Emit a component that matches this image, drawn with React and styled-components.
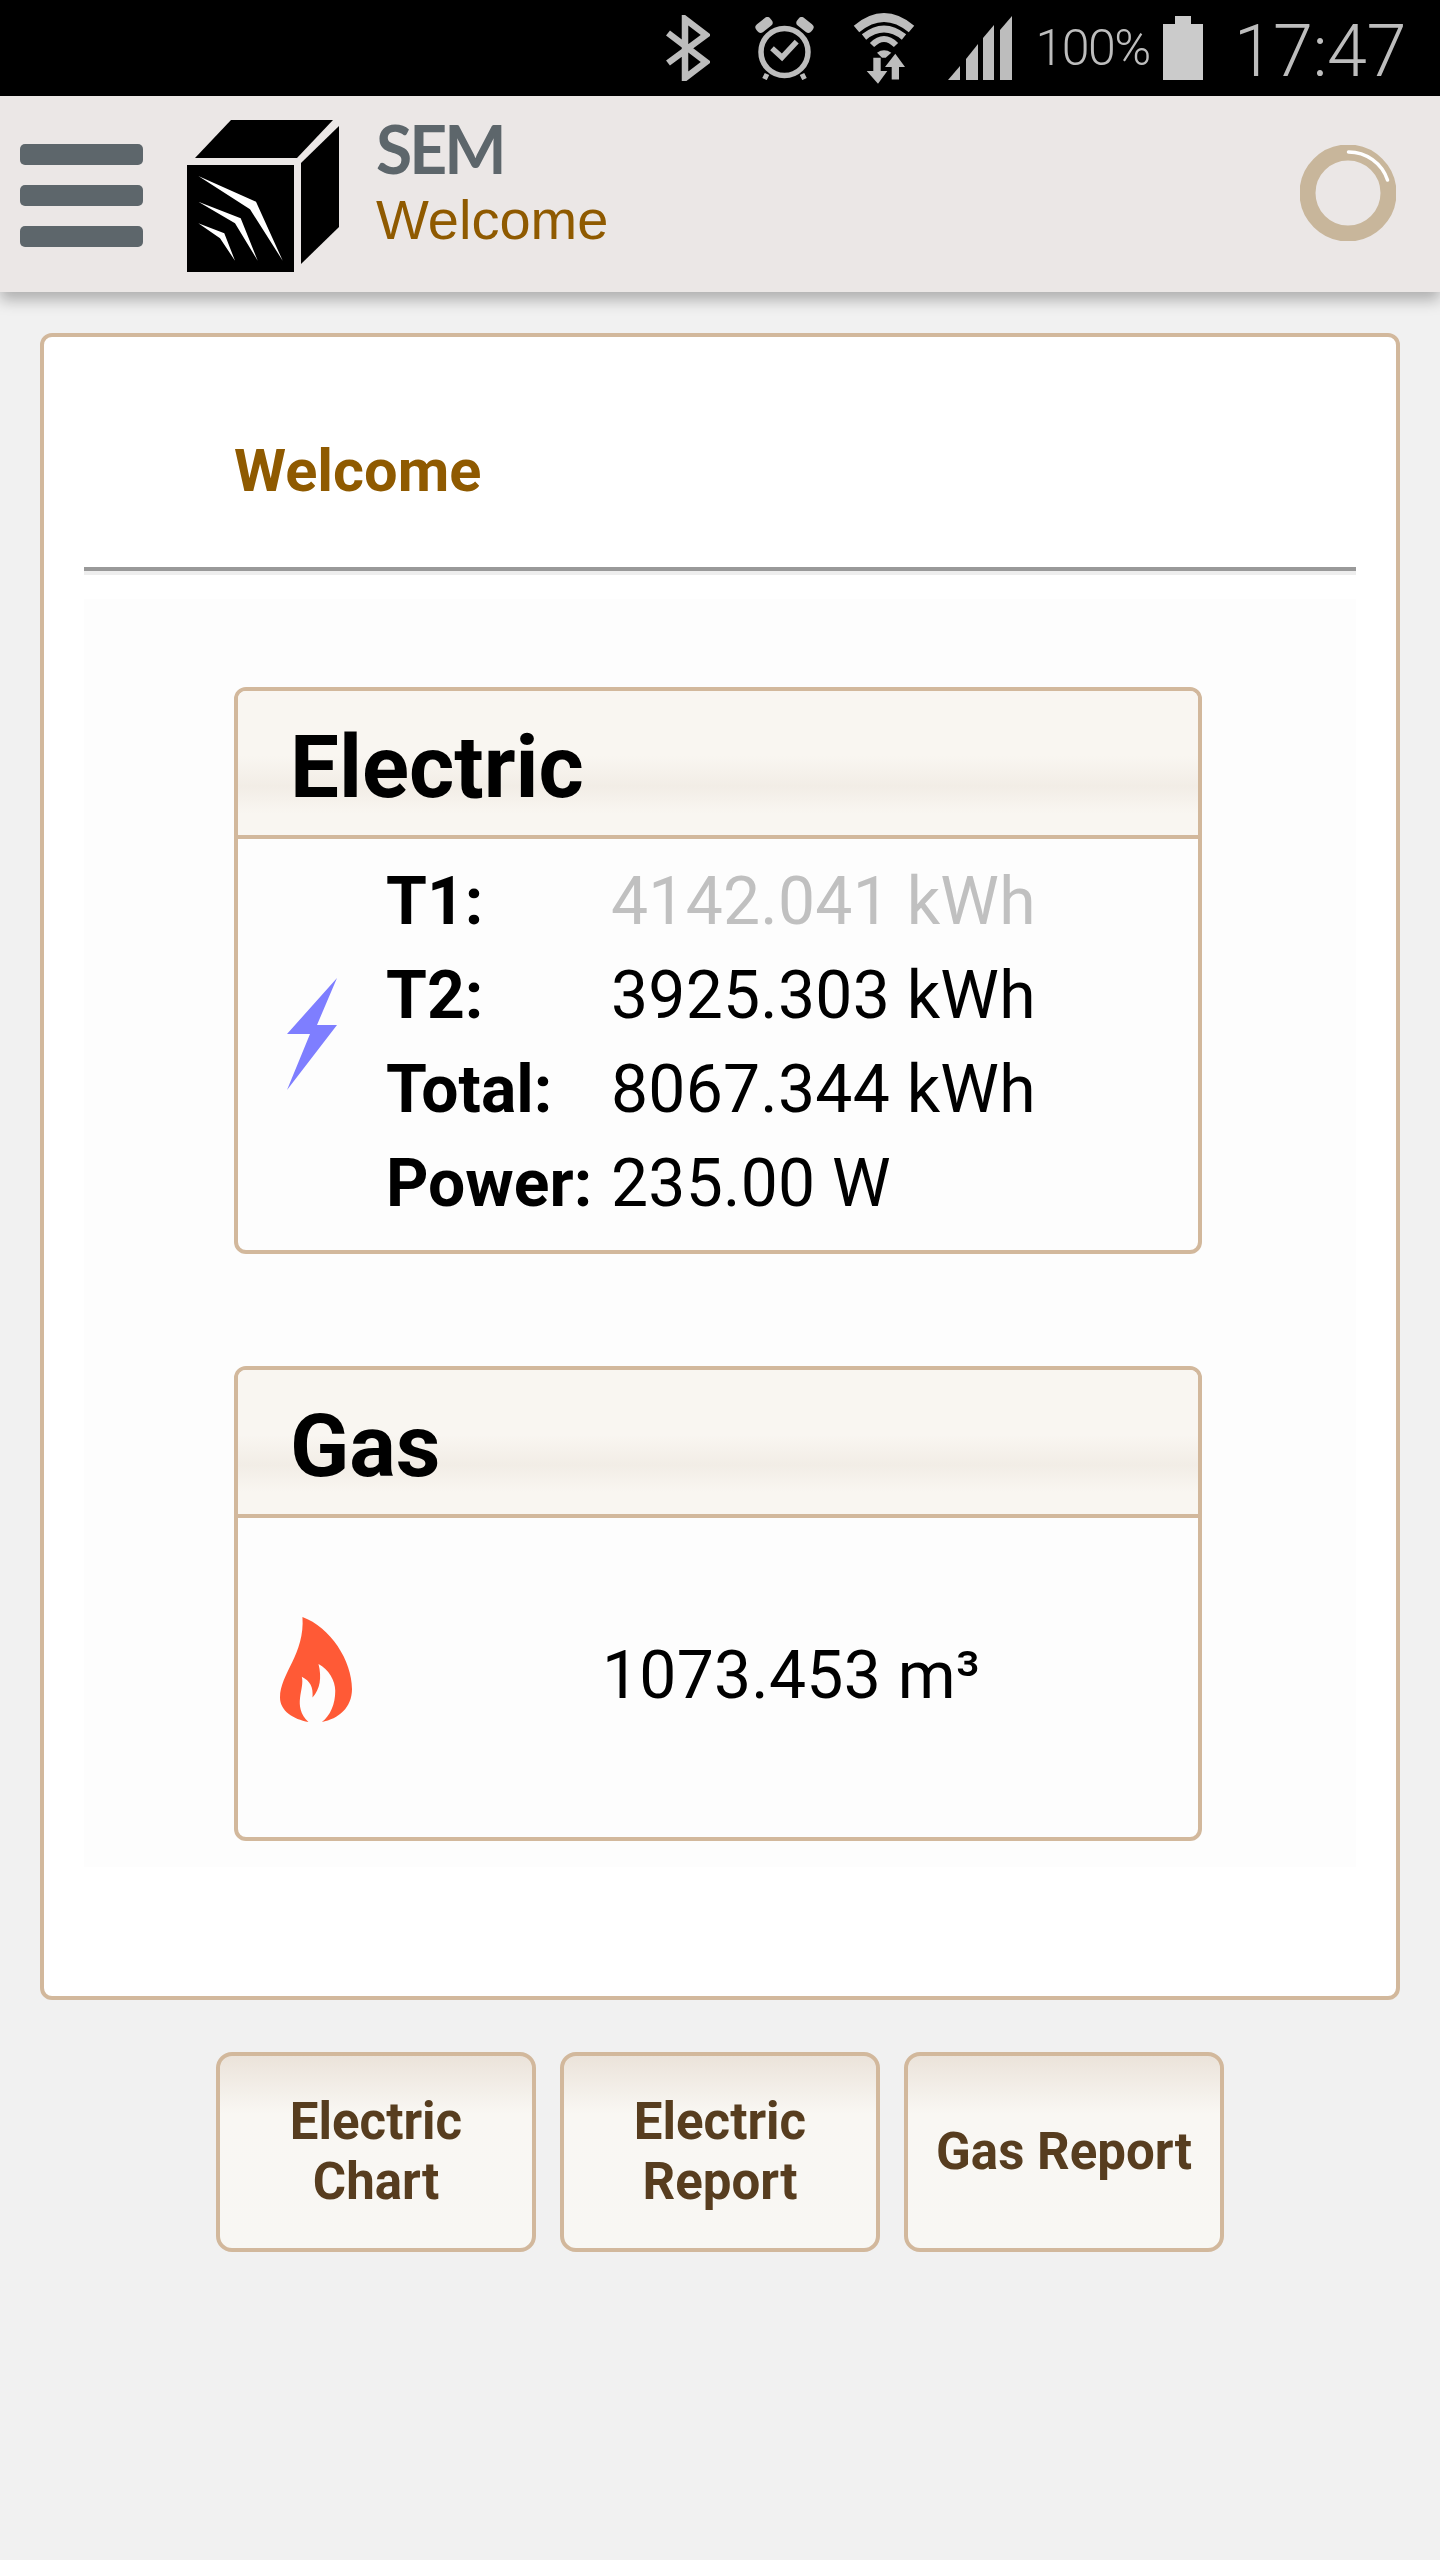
import styled, { createGlobalStyle } from 'styled-components';

const GlobalStyle = createGlobalStyle`
  html, body {
    margin: 0;
    padding: 0;
    background: #f1f1f1;
  }
  body {
    font-family: Roboto, "Liberation Sans", sans-serif;
  }
`;

function BluetoothIcon() {
  return (
    <StatusSvg $gap={45} width="44" height="66" viewBox="0 0 44 66">
      <path d="M2 18 L40 47 L19 63 L19 4 L40 20 L2 48" fill="none" stroke="#bdbdbd" strokeWidth="6.5" />
    </StatusSvg>
  );
}

function AlarmIcon() {
  return (
    <StatusSvg $gap={36} width="60" height="63" viewBox="0 0 60 63">
      <rect x="0" y="3" width="18" height="10" rx="4" transform="rotate(-38 9 8)" fill="#bdbdbd" />
      <rect x="41" y="3" width="18" height="10" rx="4" transform="rotate(38 50 8)" fill="#bdbdbd" />
      <circle cx="29.5" cy="35" r="23.5" fill="none" stroke="#bdbdbd" strokeWidth="5.5" />
      <path d="M17 31.3 L27 40.3 L41.7 24.7" fill="none" stroke="#bdbdbd" strokeWidth="5.5" />
      <path d="M12 57 L9.5 62 M47 57 L49.5 62" stroke="#bdbdbd" strokeWidth="5" />
    </StatusSvg>
  );
}

function WifiIcon() {
  return (
    <StatusSvg $gap={31} width="66" height="71" viewBox="0 0 66 71">
      <path d="M5.5 16 Q33 -7 60.5 16" fill="none" stroke="#bdbdbd" strokeWidth="8.5" />
      <path d="M13 24 Q33 8 53 24" fill="none" stroke="#bdbdbd" strokeWidth="7" />
      <path d="M21 32 Q33 20 45 32" fill="none" stroke="#bdbdbd" strokeWidth="6" />
      <path d="M26 39.7 Q33 35 40.3 39.7 L34.7 44.7 H31 Z" fill="#bdbdbd" />
      <path d="M22.3 44.7 H29.7 V58 H36.3 L27 70.7 L15.7 58 H22.3 Z" fill="#bdbdbd" />
      <path d="M40.7 66.5 V54 H34 L44.3 40.7 L54 54 H48 V66.5 Z" fill="#bdbdbd" />
    </StatusSvg>
  );
}

function SignalIcon() {
  return (
    <StatusSvg $gap={23} width="64" height="64" viewBox="0 0 64 64">
      <path d="M0 64 L12 50 V64 Z" fill="#bdbdbd" />
      <path d="M18 64 V43 L30 28 V64 Z" fill="#bdbdbd" />
      <path d="M35 64 V22 L46 9 V64 Z" fill="#bdbdbd" />
      <path d="M52 64 V14 L64 0 V64 Z" fill="#bdbdbd" />
    </StatusSvg>
  );
}

function BatteryIcon() {
  return (
    <StatusSvg $gap={31} width="40" height="64" viewBox="0 0 40 64">
      <path d="M12 0 H28 V8 H40 V64 H0 V8 H12 Z" fill="#cbcbcb" />
    </StatusSvg>
  );
}

function CubeLogo() {
  return (
    <LogoSvg width="152" height="152" viewBox="187 120 152 152">
      <path d="M231 120 H333 L297 158 H195 Z" fill="#000" />
      <path d="M339 126 V227 L301 264 V163 Z" fill="#000" />
      <rect x="187" y="165" width="107" height="107" fill="#000" />
      <path d="M198.3 176 L256 201.7 L282.7 260.7 L250 209.3 Z" fill="#fff" />
      <path d="M198.3 201.7 L240.7 218.3 L257.7 260.7 L235 223.3 Z" fill="#fff" />
      <path d="M198.3 223.3 L224.3 233.3 L235 260.7 L220 238.3 Z" fill="#fff" />
    </LogoSvg>
  );
}

function Spinner() {
  return (
    <svg width="96" height="96" viewBox="0 0 96 96">
      <circle cx="48" cy="48" r="40.5" fill="none" stroke="#c8b69b" strokeWidth="16" />
      <path d="M48.5 7 A41 41 0 0 1 87.5 35" fill="none" stroke="#fff" strokeWidth="3.5" strokeLinecap="round" />
    </svg>
  );
}

function BoltIcon() {
  return (
    <svg width="51" height="112" viewBox="0 0 51 112">
      <path d="M50 0 L0 56 H23 L0 112 L50 47 H30 Z" fill="#7e7eff" />
    </svg>
  );
}

function FlameIcon() {
  return (
    <svg width="72" height="105" viewBox="0 0 215 313">
      <path
        d="M67 0 C150 30 215 130 215 215 C215 270 175 305 125 313 C150 295 165 260 165 220 C165 190 145 155 115 140 C125 180 120 215 97 240 C100 210 90 190 65 178 C75 215 35 265 85 313 C40 305 0 280 0 240 C0 170 75 110 67 0 Z"
        fill="#ff5a36"
      />
    </svg>
  );
}

export default function App() {
  return (
    <Page>
      <GlobalStyle />
      <StatusBar>
        <BluetoothIcon />
        <AlarmIcon />
        <WifiIcon />
        <SignalIcon />
        <BatteryText>100%</BatteryText>
        <BatteryIcon />
        <Clock>17:47</Clock>
      </StatusBar>

      <Header>
        <MenuButton>
          <MenuBar />
          <MenuBar />
          <MenuBar />
        </MenuButton>
        <CubeLogo />
        <TitleBlock>
          <AppName>SEM</AppName>
          <PageName>Welcome</PageName>
        </TitleBlock>
        <SpinnerBox>
          <Spinner />
        </SpinnerBox>
      </Header>

      <Panel>
        <PanelTitle>Welcome</PanelTitle>
        <Rule />
        <Content>
          <Card>
            <CardHead>Electric</CardHead>
            <ElectricBody>
              <BoltBox>
                <BoltIcon />
              </BoltBox>
              <Readings>
                <Label>T1:</Label>
                <Value $muted>4142.041 kWh</Value>
                <Label>T2:</Label>
                <Value>3925.303 kWh</Value>
                <Label>Total:</Label>
                <Value>8067.344 kWh</Value>
                <Label>Power:</Label>
                <Value>235.00 W</Value>
              </Readings>
            </ElectricBody>
          </Card>

          <Card>
            <CardHead>Gas</CardHead>
            <GasBody>
              <FlameBox>
                <FlameIcon />
              </FlameBox>
              <GasValue>1073.453 m³</GasValue>
            </GasBody>
          </Card>
        </Content>
      </Panel>

      <ButtonRow>
        <ReportButton>Electric Chart</ReportButton>
        <ReportButton>Electric Report</ReportButton>
        <ReportButton>Gas Report</ReportButton>
      </ButtonRow>
    </Page>
  );
}

const Page = styled.div`
  min-height: 2560px;
  background: #f1f1f1;
  overflow: hidden;
`;

const StatusBar = styled.div`
  display: flex;
  align-items: center;
  justify-content: flex-end;
  height: 96px;
  padding-right: 34px;
  background: #000;
`;

const StatusSvg = styled.svg`
  display: block;
  flex: none;
  margin-right: ${(props) => props.$gap}px;
`;

const BatteryText = styled.span`
  margin-right: 13px;
  font-size: 50px;
  font-weight: 300;
  letter-spacing: -1.5px;
  color: #bdbdbd;
`;

const Clock = styled.span`
  margin-top: 6px;
  font-size: 72px;
  font-weight: 300;
  letter-spacing: -0.5px;
  color: #bdbdbd;
`;

const Header = styled.header`
  box-sizing: border-box;
  display: flex;
  align-items: center;
  height: 196px;
  padding: 3px 44px 0 20px;
  background: #ebe7e6;
  box-shadow: 0 8px 14px rgba(0, 0, 0, 0.28);
`;

const MenuButton = styled.div`
  display: flex;
  flex-direction: column;
  gap: 20px;
  width: 123px;
  margin-right: 44px;
`;

const MenuBar = styled.div`
  height: 21px;
  border-radius: 5px;
  background: #5d666b;
`;

const LogoSvg = styled.svg`
  display: block;
  flex: none;
  margin-right: 37px;
`;

const TitleBlock = styled.div`
  display: flex;
  flex: 1;
  flex-direction: column;
  margin-bottom: 24px;
`;

const AppName = styled.div`
  font-family: Lato, "Liberation Sans", sans-serif;
  font-size: 66px;
  font-weight: 700;
  line-height: 72px;
  letter-spacing: -3px;
  color: #5d666b;
`;

const PageName = styled.div`
  margin-top: 1px;
  font-family: "Liberation Sans", Arial, sans-serif;
  font-size: 56px;
  line-height: 68px;
  color: #8f5a00;
`;

const SpinnerBox = styled.div`
  display: flex;
  align-items: center;
  margin-bottom: 6px;
`;

const Panel = styled.section`
  box-sizing: border-box;
  height: 1667px;
  margin: 41px 40px 0;
  padding: 0 40px;
  border: 4px solid #d2b89c;
  border-radius: 12px;
  background: #fff;
`;

const PanelTitle = styled.h2`
  box-sizing: border-box;
  display: flex;
  align-items: center;
  height: 230px;
  margin: 0;
  padding: 38px 0 0 150px;
  font-size: 59.5px;
  font-weight: 700;
  color: #8f5a00;
`;

const Rule = styled.div`
  height: 4px;
  border-bottom: 4px solid #eeeeee;
  background: #999999;
  background-clip: padding-box;
`;

const Content = styled.div`
  display: flex;
  flex-direction: column;
  align-items: flex-start;
  gap: 112px;
  margin-top: 24px;
  padding: 88px 0 26px 150px;
  background: #fdfdfd;
`;

const Card = styled.div`
  box-sizing: border-box;
  width: 968px;
  border: 4px solid #d2b89c;
  border-radius: 12px;
  overflow: hidden;
  background: #fdfdfd;
`;

const CardHead = styled.div`
  box-sizing: border-box;
  height: 148px;
  padding-left: 52px;
  border-bottom: 4px solid #d2b89c;
  background: linear-gradient(#f9f6f1 0%, #f9f6f1 45%, #f2ede6 66%, #f9f6f1 85%);
  font-size: 87px;
  font-weight: 700;
  line-height: 152px;
  color: #000;
`;

const ElectricBody = styled.div`
  display: flex;
  align-items: center;
  height: 411px;
  padding-left: 49px;
`;

const BoltBox = styled.div`
  display: flex;
  flex: none;
  width: 99px;
  margin-bottom: 21px;
`;

const Readings = styled.div`
  display: grid;
  grid-template-columns: 225px auto;
  grid-auto-rows: 94px;
  align-items: center;
  margin-bottom: 5px;
`;

const Label = styled.div`
  font-size: 66px;
  font-weight: 700;
  color: #000;
`;

const Value = styled.div`
  font-size: 66px;
  letter-spacing: 0.25px;
  color: ${(props) => (props.$muted ? '#c0c0c0' : '#000')};
`;

const GasBody = styled.div`
  display: flex;
  align-items: center;
  height: 319px;
  padding-left: 42px;
`;

const FlameBox = styled.div`
  display: flex;
  flex: none;
  width: 322px;
  margin-bottom: 16px;
`;

const GasValue = styled(Value)`
  margin-bottom: 5px;
`;

const ButtonRow = styled.div`
  display: flex;
  justify-content: center;
  gap: 24px;
  margin-top: 52px;
`;

const ReportButton = styled.div`
  box-sizing: border-box;
  display: flex;
  align-items: center;
  justify-content: center;
  width: 320px;
  height: 200px;
  padding: 0 20px;
  border: 4px solid #d2b89c;
  border-radius: 16px;
  background: linear-gradient(#ebe3da 0%, #f9f7f3 30%, #f8f7f3 100%);
  font-size: 51px;
  font-weight: 700;
  line-height: 60px;
  text-align: center;
  color: #573d1f;
`;
